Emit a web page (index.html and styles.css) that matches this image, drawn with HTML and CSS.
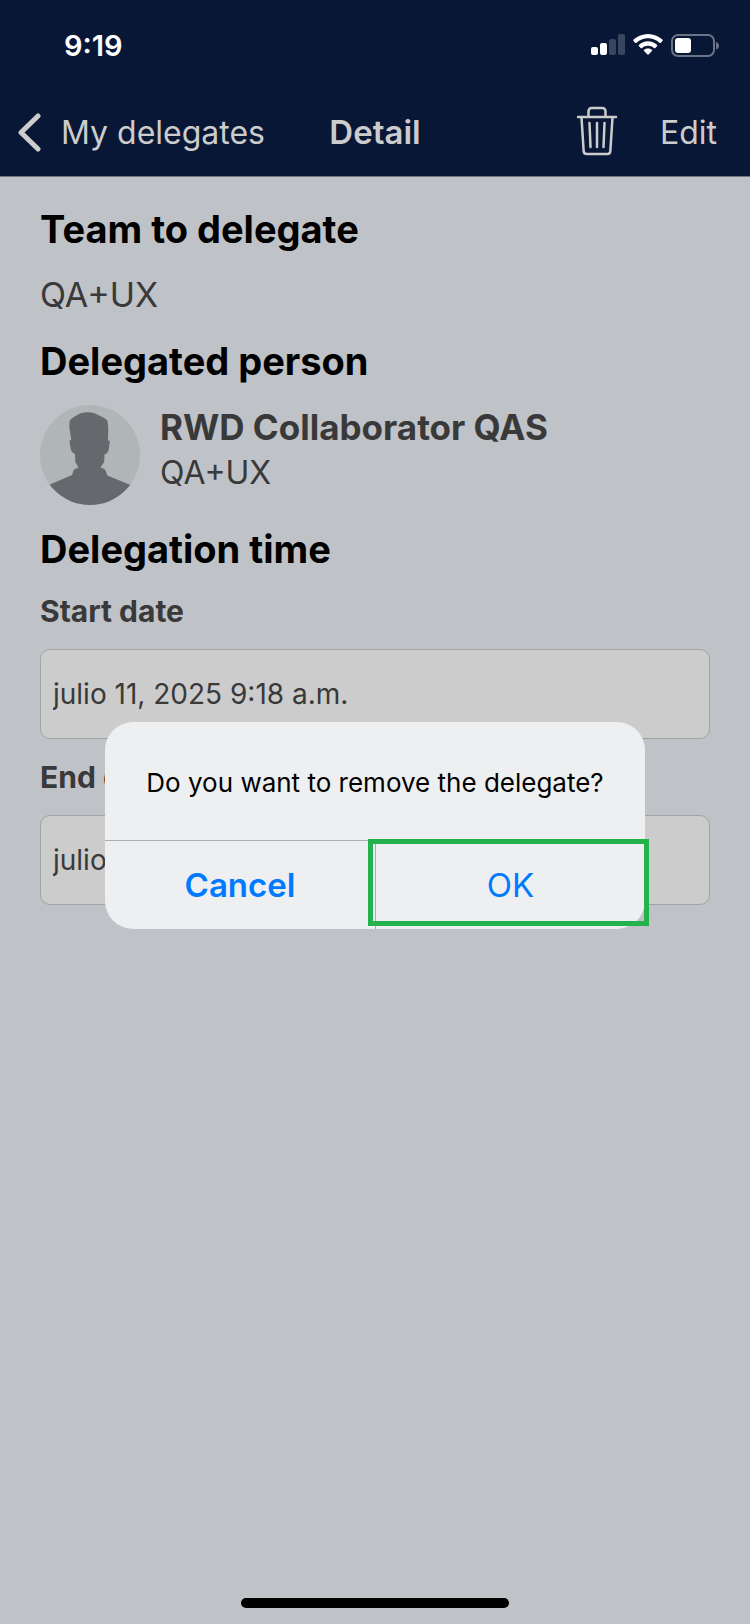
FILE: index.html
```html
<!DOCTYPE html>
<html lang="en">
<head>
<meta charset="utf-8">
<meta name="viewport" content="width=device-width, initial-scale=1">
<title>Detail</title>
<link rel="stylesheet" href="styles.css">
</head>
<body>
<div class="screen">
  <header class="header">
    <div class="status">
      <time class="status-time">9:19</time>
      <div class="status-icons">
        <svg width="34" height="22" viewBox="0 0 34 22" fill="#fff" aria-hidden="true">
          <rect x="0" y="13" width="7" height="8" rx="2"/>
          <rect x="9" y="9" width="7" height="12" rx="2"/>
          <rect x="18" y="5" width="7" height="16" rx="2" fill="#3a465e"/>
          <rect x="27" y="0" width="7" height="21" rx="2" fill="#3a465e"/>
        </svg>
        <svg width="30" height="22" viewBox="0 0 30 22" fill="#fff" aria-hidden="true">
          <path d="M15 0C9.500 0 4.500 2.100.600 5.600c-.500.400-.500 1 0 1.500l1.500 1.600c.400.400 1 .400 1.500 0C6.700 6 10.700 4.300 15 4.300S23.300 6 26.400 8.700c.500.400 1.100.400 1.500 0l1.500-1.600c.500-.500.500-1.100 0-1.500C25.500 2.100 20.500 0 15 0Z"/>
          <path d="M15 7.300c-3.400 0-6.500 1.300-8.900 3.400-.500.400-.500 1-.1 1.500l1.700 1.700c.400.400 1 .400 1.400 0 1.600-1.400 3.600-2.200 5.900-2.200s4.300.800 5.900 2.200c.400.400 1 .400 1.400 0l1.700-1.700c.400-.500.400-1.100-.1-1.500-2.400-2.100-5.500-3.400-8.900-3.400Z"/>
          <path d="M15 14.400c-1.500 0-2.800.500-3.800 1.300-.500.400-.500 1-.1 1.400l3.100 3.200c.5.500 1.100.5 1.600 0l3.100-3.200c.4-.4.4-1-.1-1.400-1-.8-2.300-1.300-3.800-1.300Z"/>
        </svg>
        <svg width="48" height="23" viewBox="0 0 48 23" aria-hidden="true">
          <rect x="1" y="1" width="42" height="21" rx="6" fill="none" stroke="#6b7487" stroke-width="2"/>
          <rect x="4" y="4" width="16" height="15" rx="3" fill="#fff"/>
          <path d="M45 8c1.800.5 3 2 3 3.800s-1.200 3.300-3 3.800Z" fill="#6b7487"/>
        </svg>
      </div>
    </div>
    <nav class="nav">
      <a class="back" href="#">
        <svg width="24" height="40" viewBox="0 0 24 40" fill="none" stroke="#cccccc" stroke-width="5" stroke-linecap="round" stroke-linejoin="round" aria-hidden="true"><path d="M21 4 4 20.500 21 37"/></svg>
        <span>My delegates</span>
      </a>
      <h1 class="title">Detail</h1>
      <div class="actions">
        <button class="icon-button" type="button" aria-label="Delete">
          <svg width="42" height="50" viewBox="0 0 42 50" fill="none" stroke="#cccccc" stroke-width="2.500" stroke-linecap="round" stroke-linejoin="round" aria-hidden="true">
            <path d="M2 11h38"/>
            <path d="M12.500 10.500V5a3 3 0 0 1 3-3h11a3 3 0 0 1 3 3v5.500"/>
            <path d="M5.500 11.500l2.200 34a3 3 0 0 0 3 2.500h20.600a3 3 0 0 0 3-2.500l2.200-34"/>
            <path d="M13.500 17l1 24M21 17v24M28.500 17l-1 24"/>
          </svg>
        </button>
        <button class="text-button" type="button">Edit</button>
      </div>
    </nav>
  </header>

  <main class="content">
    <h2 class="heading">Team to delegate</h2>
    <p class="value">QA+UX</p>
    <h2 class="heading">Delegated person</h2>
    <div class="person">
      <svg class="avatar" width="100" height="100" viewBox="0 0 100 100" aria-hidden="true">
        <clipPath id="round"><circle cx="50" cy="50" r="50"/></clipPath>
        <g clip-path="url(#round)">
          <rect width="100" height="100" fill="#b0b5b6"/>
          <path fill="#65686d" d="M0 84 10 79.500 32 70c.8-1.500 1.300-3.500 1.300-4.500 1.500-1.500 3-2.200 5-2.500-.3-2-1.500-3.500-3-6l-.3-8c-2-.8-3.300-2-4-4l-1.700-9.500 2-.5-2-13 .2-5.500C31 13 34 12.200 38 9.500c3-1.500 6.500-2.300 10-2.200 4.500.1 7.500 1.200 10.500 3 3.500 1.500 7.500 3 9 5.700L68.300 24l-.3 11.500 1.800.5-1 8.500c-.6 2.800-2 4.200-4.300 5l-.3 7.500c-1.500 2-3 4-3.500 6 2.500.3 4.300 1 5 3 .6 1.500 1.300 3 1.500 4.500L90 79.700 100 84v16H0Z"/>
        </g>
      </svg>
      <div class="person-text">
        <strong>RWD Collaborator QAS</strong>
        <span>QA+UX</span>
      </div>
    </div>
    <h2 class="heading">Delegation time</h2>
    <label class="label" for="start">Start date</label>
    <input class="field" id="start" type="text" value="julio 11, 2025 9:18 a.m." readonly>
    <label class="label" for="end">End date</label>
    <input class="field" id="end" type="text" value="julio 11, 2025 9:18 a.m." readonly>
  </main>
  <div class="home-bar"></div>
</div>

<div class="overlay">
  <section class="alert" role="alertdialog" aria-labelledby="message">
    <p class="alert-message" id="message">Do you want to remove the delegate?</p>
    <div class="alert-actions">
      <button class="alert-button cancel" type="button">Cancel</button>
      <button class="alert-button ok" type="button">OK</button>
    </div>
  </section>
</div>
</body>
</html>
```
FILE: styles.css
```css
* {
  box-sizing: border-box;
}

body {
  margin: 0;
  background: #bfc2c7;
  color: #3a3939;
  font-family: Inter, "Liberation Sans", sans-serif;
}

h1, h2, p {
  margin: 0;
}

button {
  padding: 0;
  border: 0;
  background: none;
  font: inherit;
  cursor: pointer;
}

svg {
  display: block;
  flex: none;
}

.screen {
  display: flex;
  flex-direction: column;
  min-height: 100vh;
}

.header {
  background: #081735;
  color: #cccccc;
  border-bottom: 1px solid #6f757f;
}

.status {
  display: flex;
  justify-content: space-between;
  align-items: center;
  height: 88px;
  padding: 2px 31px 0 64px;
  color: #fff;
}

.status-time {
  font-size: 29px;
  font-weight: 600;
}

.status-icons {
  display: flex;
  align-items: center;
  gap: 8px;
}

.nav {
  display: grid;
  grid-template-columns: 1fr auto 1fr;
  align-items: center;
  height: 88px;
  padding: 0 17px;
  font-size: 32px;
}

.back {
  display: flex;
  align-items: center;
  gap: 20px;
  color: inherit;
  text-decoration: none;
}

.title {
  font-size: 33px;
  font-weight: 600;
}

.actions {
  display: flex;
  justify-content: flex-end;
  align-items: center;
  gap: 42px;
  padding-right: 16px;
}

.icon-button {
  padding-bottom: 2px;
}

.text-button {
  color: #cccccc;
}

.content {
  display: flex;
  flex-direction: column;
  flex: 1;
  gap: 20px;
  padding: 28px 40px;
}

.heading {
  color: #000;
  font-size: 38px;
  font-weight: 700;
  line-height: 48px;
}

.value {
  font-size: 34px;
  line-height: 44px;
}

.person {
  display: flex;
  gap: 20px;
}

.person-text {
  display: flex;
  flex-direction: column;
  font-size: 35px;
  line-height: 44px;
}

.person-text span {
  font-size: 32px;
  line-height: 48px;
}

.label {
  font-size: 30px;
  font-weight: 700;
  line-height: 36px;
}

.field {
  width: 100%;
  height: 90px;
  padding: 0 12px;
  border: 1px solid #a3a3a4;
  border-radius: 10px;
  background: #cccccc;
  color: inherit;
  font: inherit;
  font-size: 28px;
}

.home-bar {
  align-self: center;
  width: 268px;
  height: 10px;
  margin-bottom: 16px;
  border-radius: 5px;
  background: #000;
}

.overlay {
  position: fixed;
  inset: 0;
  display: flex;
  align-items: center;
  justify-content: center;
  padding-top: 26px;
}

.alert {
  width: 72%;
  border-radius: 28px;
  background: #eeeff0;
}

.alert-message {
  padding: 44px 24px 40px;
  color: #000;
  font-size: 26px;
  line-height: 34px;
  text-align: center;
}

.alert-actions {
  display: grid;
  grid-template-columns: 1fr 1fr;
  border-top: 1px solid #abadb0;
}

.alert-button {
  position: relative;
  height: 88px;
  color: #007aff;
  font-size: 33px;
}

.cancel {
  font-weight: 600;
}

.ok {
  border-left: 1px solid #abadb0;
}

/* Highlight frame around the confirm action */
.ok::after {
  content: "";
  position: absolute;
  inset: -2px -4px 3px -8px;
  border: 5px solid #23b24b;
}
```
